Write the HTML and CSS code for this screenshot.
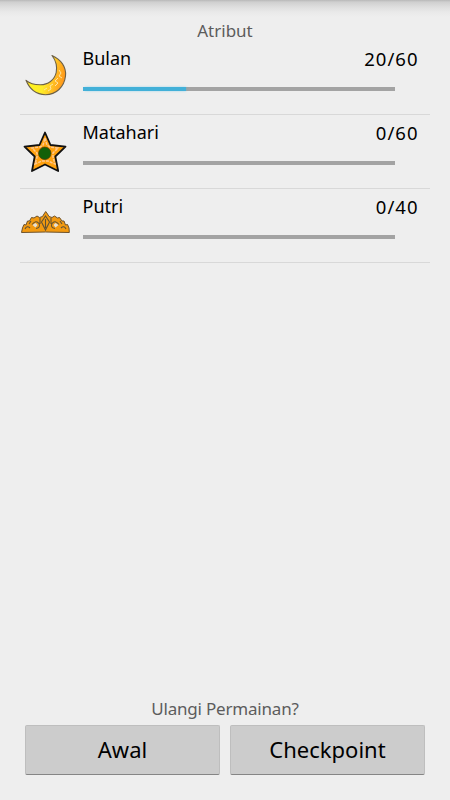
FILE: index.html
```html
<!DOCTYPE html>
<html lang="id">
<head>
    <meta charset="utf-8">
    <title>Atribut</title>
    <link rel="stylesheet" href="styles.css">
</head>
<body>
    <h1 class="title">Atribut</h1>

    <ul class="list">
        <li class="item">
            <svg class="icon" viewBox="0 0 50 50">
                <defs>
                    <linearGradient id="moon" x1="0" y1="0.3" x2="1" y2="0.5">
                        <stop offset="0" stop-color="#ffc814"/>
                        <stop offset="0.2" stop-color="#fff21c"/>
                        <stop offset="0.5" stop-color="#ffec28"/>
                        <stop offset="0.8" stop-color="#ffb422"/>
                        <stop offset="1" stop-color="#ff961a"/>
                    </linearGradient>
                </defs>
                <path d="M32 5.500C41 9.500 46.500 17 45.500 26C44.300 37 36 44.800 25.500 44.800C16 44.500 9.500 39 6 30.300C9 32.800 14 34.700 20 34.800C28 35 34.500 30 36.200 22.500C37.200 17 35.500 10 32 5.500Z" fill="url(#moon)" stroke="#6c6048" stroke-width="1.100" stroke-linejoin="round"/>
                <path d="M39 20l2 3-2 3 3 2M38 28l-3 3 3 2-3 3M33 34l-3 2 1 3-3 2M27 38l-3 2" fill="none" stroke="#ffe3a0" stroke-width="1"/>
            </svg>
            <div class="info">
                <div class="label"><span>Bulan</span><span class="value">20/60</span></div>
                <div class="bar"><div class="fill" style="width: 33.33%"></div></div>
            </div>
        </li>
        <li class="item">
            <svg class="icon" viewBox="0 0 50 50">
                <path d="M25 8.500L30.500 21L45.500 22.700L35.300 32.500L38.200 47L25 40.500L12 47L14.700 32.500L4.500 22.700L19.500 21Z" fill="#ffa10d" stroke="#111" stroke-width="1.800" stroke-linejoin="round"/>
                <path d="M25 14l2 7 3 2 8 1-5 5v4l2 7-7-3h-6l-7 3 2-7v-4l-5-5 8-1 3-2z" fill="none" stroke="#ffc78e" stroke-width="1.500" stroke-dasharray="3 1"/>
                <circle cx="24.800" cy="29.300" r="6.200" fill="#136008" stroke="#583c08" stroke-width="0.800"/>
            </svg>
            <div class="info">
                <div class="label"><span>Matahari</span><span class="value">0/60</span></div>
                <div class="bar"></div>
            </div>
        </li>
        <li class="item">
            <svg class="icon" viewBox="0 0 50 50">
                <path d="M1.500 34.500L2.500 30L4 26.500L6 27L7.500 23L9.500 23L11.500 19.500L14 20L17 18L19.500 19.500L22.500 18.500L24 16L25.700 13.500L27.500 16L29 18.500L32 19.500L34.500 18L37.500 20L39.500 19.500L42 23L44 23L45.500 27L47.500 26.500L49 30L49.300 34.500Q25.500 33.500 1.500 34.500Z" fill="#f39a10" stroke="#6d522c" stroke-width="1" stroke-linejoin="round"/>
                <path d="M12 26.500q4-5 7-1q2 4-3 5M39 26.500q-4-5-7-1q-2 4 3 5M25.500 18l-4 6 4 8 4-8zM25.500 21v9M5 31q2-4 5-1M46 31q-2-4-5-1M20 20v6M31 20v6M9 26l2-3M42 26l-2-3" fill="none" stroke="#5f5237" stroke-width="1.100"/>
                <path d="M12.500 27l3-2 2 2-2 2.500zM38.500 27l-3-2-2 2 2 2.500z" fill="#e4e0d8"/>
            </svg>
            <div class="info">
                <div class="label"><span>Putri</span><span class="value">0/40</span></div>
                <div class="bar"></div>
            </div>
        </li>
    </ul>

    <div class="footer">
        <p class="question">Ulangi Permainan?</p>
        <div class="buttons">
            <button class="btn">Awal</button>
            <button class="btn">Checkpoint</button>
        </div>
    </div>
</body>
</html>
```
FILE: styles.css
```css
* { box-sizing: border-box; }
body { display: flex; flex-direction: column; height: 800px; margin: 0; padding: 20px 20px 25px; overflow: hidden; background: linear-gradient(#b8b8b8, #cfcfcf 2px, #dedede 7px, #e9e9e9 12px, #eee 17px) no-repeat #eee; color: #000; font-family: "Noto Sans", sans-serif; }
.title, .question { margin: 0; color: #5c5c5c; font-size: 17px; font-weight: normal; line-height: 21px; text-align: center; }
.question { letter-spacing: -0.2px; }
.list { margin: 0; padding: 0; list-style: none; }
.item { display: flex; gap: 12.5px; height: 74px; padding-top: 9px; border-bottom: 1px solid #d8d8d8; }
.icon { flex: none; width: 50px; height: 50px; }
.info { flex: 1; }
.label { display: flex; justify-content: space-between; height: 38px; margin-top: -4px; padding-right: 11.5px; font-size: 18px; line-height: 25px; }
.value { font-size: 18.5px; letter-spacing: 1px; }
.bar { width: 312px; height: 4px; margin-top: 3px; background: #a3a3a3; }
.fill { height: 4px; background: #42b0d8; box-shadow: 1px 0 3px -1px #33b5e5; }
.footer { margin-top: auto; }
.buttons { display: flex; gap: 10px; margin-top: 6px; padding: 0 5px; }
.btn { flex: 1; height: 50px; padding: 0 0 2px; border: 1px solid #bebebe; border-bottom: 1px solid #858585; border-radius: 2px; background: #ccc; color: #000; font-family: inherit; font-size: 22px; }
```
